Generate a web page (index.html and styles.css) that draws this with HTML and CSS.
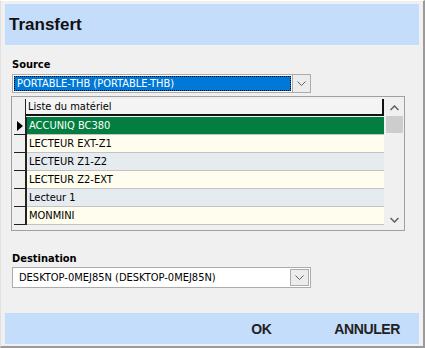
FILE: index.html
```html
<!DOCTYPE html>
<html lang="fr">
<head>
    <meta charset="UTF-8">
    <title>Transfert</title>
    <link rel="stylesheet" href="styles.css">
</head>
<body>
    <div class="window">
        <div class="title-bar">Transfert</div>

        <div class="content">
            <div class="label">Source</div>
            <div class="combo">
                <div class="combo-value selected"><span>PORTABLE-THB (PORTABLE-THB)</span></div>
                <div class="combo-btn">
                    <svg width="9" height="5" viewBox="0 0 9 5"><path d="M0.5 0.5 L4.5 4.5 L8.5 0.5" fill="none" stroke="#606060" stroke-width="1"/></svg>
                </div>
            </div>

            <div class="grid">
                <div class="grid-body">
                    <div class="grid-row header">
                        <div class="selector"></div>
                        <div class="cell">Liste du matériel</div>
                    </div>
                    <div class="grid-row current">
                        <div class="selector"><span class="arrow"></span></div>
                        <div class="cell">ACCUNIQ BC380</div>
                    </div>
                    <div class="grid-row odd">
                        <div class="selector"></div>
                        <div class="cell">LECTEUR EXT-Z1</div>
                    </div>
                    <div class="grid-row even">
                        <div class="selector"></div>
                        <div class="cell">LECTEUR Z1-Z2</div>
                    </div>
                    <div class="grid-row odd">
                        <div class="selector"></div>
                        <div class="cell">LECTEUR Z2-EXT</div>
                    </div>
                    <div class="grid-row even">
                        <div class="selector"></div>
                        <div class="cell">Lecteur 1</div>
                    </div>
                    <div class="grid-row odd">
                        <div class="selector"></div>
                        <div class="cell">MONMINI</div>
                    </div>
                </div>
                <div class="scrollbar">
                    <div class="scroll-arrow">
                        <svg width="9" height="6" viewBox="0 0 9 6"><path d="M0.5 5 L4.5 1 L8.5 5" fill="none" stroke="#606060" stroke-width="1.5"/></svg>
                    </div>
                    <div class="scroll-thumb"></div>
                    <div class="scroll-track"></div>
                    <div class="scroll-arrow">
                        <svg width="9" height="6" viewBox="0 0 9 6"><path d="M0.5 1 L4.5 5 L8.5 1" fill="none" stroke="#606060" stroke-width="1.5"/></svg>
                    </div>
                </div>
            </div>

            <div class="label dest-label">Destination</div>
            <div class="combo dest">
                <div class="combo-value"><span>DESKTOP-0MEJ85N (DESKTOP-0MEJ85N)</span></div>
                <div class="combo-btn">
                    <svg width="9" height="5" viewBox="0 0 9 5"><path d="M0.5 0.5 L4.5 4.5 L8.5 0.5" fill="none" stroke="#606060" stroke-width="1"/></svg>
                </div>
            </div>
        </div>

        <div class="button-bar">
            <span class="btn ok">OK</span>
            <span class="btn">ANNULER</span>
        </div>
    </div>
</body>
</html>
```

FILE: styles.css
```css
body {
    margin: 0;
    background: #ffffff;
    font-family: "DejaVu Sans Condensed", "DejaVu Sans", sans-serif;
}

.window {
    width: 425px;
    height: 348px;
    box-sizing: border-box;
    padding: 4px 4px 2px 4px;
    background: #f0f0f0;
    border-right: 2px solid #9a9a9a;
    border-bottom: 2px solid #9a9a9a;
    border-left: 1px solid #e0e0e0;
    border-top: 1px solid #ffffff;
    display: flex;
    flex-direction: column;
}

.title-bar {
    height: 41px;
    background: #c4ddfb;
    font-family: "Liberation Sans", Arial, sans-serif;
    font-weight: bold;
    font-size: 17px;
    color: #111;
    display: flex;
    align-items: center;
    padding-left: 4px;
    margin-top: -1px;
}

.content {
    flex: 1;
    padding: 13px 0 0 6px;
    font-size: 11px;
}

.label {
    font-weight: bold;
    font-size: 11px;
    color: #000;
    height: 14px;
    margin-left: 1px;
}

.combo {
    width: 299px;
    height: 19px;
    box-sizing: border-box;
    border: 1px solid #acacac;
    background: #ffffff;
    display: flex;
    margin-top: 2px;
    margin-left: 1px;
}

.combo-value {
    flex: 1;
    padding: 1px;
    display: flex;
}

.combo-value span {
    flex: 1;
    display: flex;
    align-items: center;
    padding-left: 3px;
    color: #000;
}

.combo-value.selected span {
    background: #0078d7;
    color: #ffffff;
    outline: 1px dotted #000;
    outline-offset: -1px;
}

.combo-btn {
    width: 17px;
    border-left: 1px solid #acacac;
    background: #ececec;
    display: flex;
    align-items: center;
    justify-content: center;
}

.grid {
    width: 394px;
    height: 135px;
    box-sizing: border-box;
    margin-top: 3px;
    border: 1px solid #a0a0a0;
    background: #f0f0f0;
    display: flex;
    padding: 2px 1px 2px 2px;
}

.grid-body {
    width: 372px;
}

.grid-row {
    display: flex;
    height: 18px;
}

.selector {
    width: 11px;
    background: #f0f0f0;
    border-right: 2px solid #222;
    border-bottom: 1px solid #222;
    display: flex;
    align-items: center;
    justify-content: center;
}

.arrow {
    width: 0;
    height: 0;
    border-top: 5px solid transparent;
    border-bottom: 5px solid transparent;
    border-left: 6px solid #000;
}

.cell {
    flex: 1;
    display: flex;
    align-items: center;
    padding-left: 2px;
    border-bottom: 1px solid #c3c3c3;
    color: #000;
    white-space: nowrap;
}

.header .selector {
    border-bottom: none;
    border-right: 1px solid #222;
}

.header .cell {
    background: #f4f4f4;
    border-bottom: 2px solid #111;
    border-right: 2px solid #111;
    height: 15px;
}

.current .cell {
    background: #037e40;
    color: #ffffff;
}

.odd .cell {
    background: #fffdee;
}

.even .cell {
    background: #e5ebef;
}

.scrollbar {
    width: 17px;
    margin-left: 2px;
    display: flex;
    flex-direction: column;
    background: #f0f0f0;
}

.scroll-arrow {
    height: 17px;
    display: flex;
    align-items: center;
    justify-content: center;
}

.scroll-thumb {
    height: 17px;
    background: #cdcdcd;
}

.scroll-track {
    flex: 1;
}

.dest-label {
    margin-top: 21px;
}

.combo.dest {
    height: 21px;
    margin-top: 1px;
}

.combo.dest .combo-value span {
    padding-left: 5px;
}

.combo.dest .combo-btn {
    margin: 1px;
    border: 1px solid #acacac;
}

.button-bar {
    height: 31px;
    background: #c4ddfb;
    display: flex;
    align-items: center;
    justify-content: flex-end;
    gap: 63px;
    padding-right: 19px;
    font-family: "Liberation Sans", Arial, sans-serif;
    font-size: 14px;
    font-weight: bold;
    letter-spacing: -0.4px;
    color: #222;
}
```
